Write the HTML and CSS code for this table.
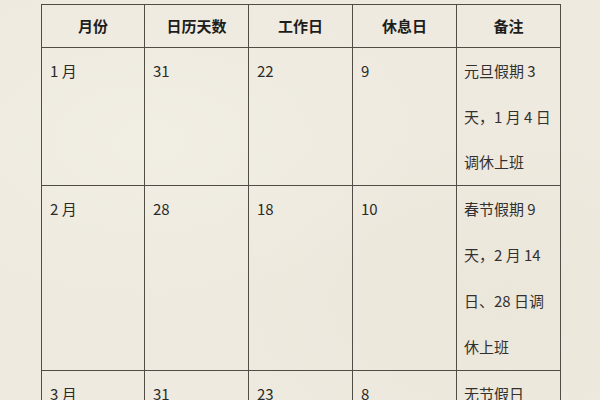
FILE: index.html
```html
<!DOCTYPE html>
<html lang="zh-CN">
<head>
<meta charset="utf-8">
<title>月份工作日表</title>
<link rel="stylesheet" href="styles.css">
</head>
<body>
<div class="page">
  <table class="days">
    <colgroup>
      <col class="c1"><col class="c2"><col class="c3"><col class="c4"><col class="c5">
    </colgroup>
    <thead>
      <tr>
        <th>月份</th>
        <th>日历天数</th>
        <th>工作日</th>
        <th>休息日</th>
        <th>备注</th>
      </tr>
    </thead>
    <tbody>
      <tr class="r1">
        <td>1 月</td>
        <td>31</td>
        <td>22</td>
        <td>9</td>
        <td>元旦假期 3<br>天，1 月 4 日<br>调休上班</td>
      </tr>
      <tr class="r2">
        <td>2 月</td>
        <td>28</td>
        <td>18</td>
        <td>10</td>
        <td>春节假期 9<br>天，2 月 14<br>日、28 日调<br>休上班</td>
      </tr>
      <tr>
        <td>3 月</td>
        <td>31</td>
        <td>23</td>
        <td>8</td>
        <td>无节假日</td>
      </tr>
    </tbody>
  </table>
</div>
</body>
</html>
```

FILE: styles.css
```css
html, body {
  margin: 0;
  padding: 0;
}
body {
  width: 600px;
  height: 400px;
  overflow: hidden;
  background-color: #eeeadf;
  background-image:
    radial-gradient(ellipse at 25% 35%, rgba(250,248,240,0.25), rgba(250,248,240,0) 45%),
    radial-gradient(ellipse at 85% 75%, rgba(225,218,202,0.2), rgba(225,218,202,0) 45%);
  font-family: "Noto Sans CJK SC", "Noto Sans", sans-serif;
  color: #2b2a28;
}
.page {
  padding: 4px 0 0 41px;
}
.days {
  border-collapse: collapse;
  table-layout: fixed;
  width: 519px;
  border: 1.5px solid #514c46;
}
.c1 { width: 103px; }
.c2 { width: 104px; }
.c3 { width: 104px; }
.c4 { width: 104px; }
.c5 { width: 104px; }
.days th, .days td {
  border: 1.5px solid #514c46;
  font-size: 15px;
  padding: 0 8px;
  vertical-align: top;
  text-align: left;
}
.days th {
  height: 42px;
  font-weight: bold;
  text-align: center;
  vertical-align: middle;
  line-height: 20px;
  color: #1e1d1b;
}
.days td {
  line-height: 46px;
}
.r1 td {
  line-height: 45.5px;
}
.days td:last-child {
  padding-left: 7px;
  padding-right: 4px;
  color: #333130;
}
```
